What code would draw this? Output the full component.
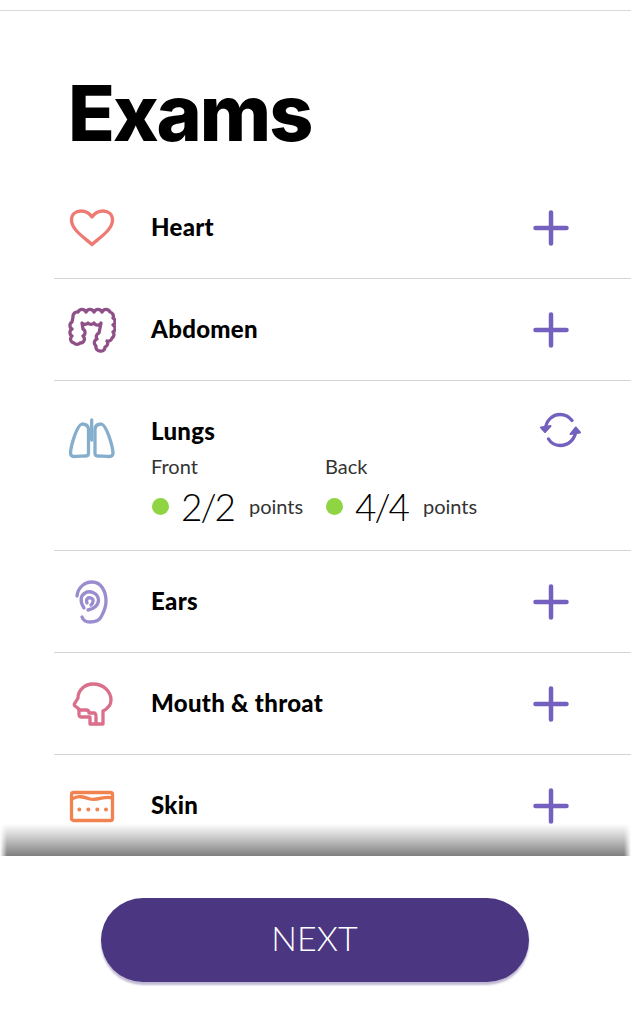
<div class="page">
  <div class="list-area">
    <h1>Exams</h1>
    <ul>
      <li class="row">
        <svg class="icon" viewBox="0 0 48 48" style="color:#ee7a73"><path d="M24 40.500C17 34 3.500 26 3.500 16C3.500 10 8 7 13 7C18 7 22 10 24 13C26 10 30 7 35 7C40 7 44.500 10 44.500 16C44.500 26 31 34 24 40.500Z"/></svg>
        <span class="name">Heart</span>
        <svg class="plus" viewBox="0 0 40 40"><path d="M20 4.500V35.500M4.500 20H35.500"/></svg>
      </li>
      <li class="row">
        <svg class="icon" viewBox="0 0 48 48" style="color:#8f4f88"><path d="M5 11a4.400 4.400 0 0 1 5-5a4.400 4.400 0 0 1 8 0a4.400 4.400 0 0 1 8 0a4.400 4.400 0 0 1 8 0a4.400 4.400 0 0 1 8 0a4.400 4.400 0 0 1 3 6a4 4 0 0 1 0 7a4 4 0 0 1 0 7a4 4 0 0 1-1 6a4 4 0 0 1-5 3a4 4 0 0 1-2 6a4 4 0 0 1-5 4a4 4 0 0 1-4-5a4 4 0 0 1 1-7a4 4 0 0 1 2-6l2-10a4 4 0 0 1-7 0a4 4 0 0 1-6 0a4 4 0 0 1-6 0l1 6a4 4 0 0 1 0 7a4 4 0 0 1-3 7a4 4 0 0 1-6 0a4 4 0 0 1-2-7a4 4 0 0 1 0-7a4 4 0 0 1 0-7Z"/></svg>
        <span class="name">Abdomen</span>
        <svg class="plus" viewBox="0 0 40 40"><path d="M20 4.500V35.500M4.500 20H35.500"/></svg>
      </li>
      <li class="row open">
        <svg class="icon" viewBox="0 0 48 48" style="color:#85aecd">
          <path d="M20.500 14C20 10 17 9 14 9C9 10 3 30 2.500 38C2.500 41 4 41.500 6 41.500C10 41.500 15 41 18 41C20 41 20.500 40 20.500 38Z"/>
          <path d="M27 14C27.400 10 30.400 9 33.400 9C38.400 10 44.400 30 45 38C45 41 43.400 41.500 41.400 41.500C37.400 41.500 32.400 41 29.400 41C27.400 41 27 40 27 38Z"/>
          <path d="M23.700 5V25"/>
        </svg>
        <div class="detail">
          <span class="name">Lungs</span>
          <div class="stats">
            <div class="stat">
              <div class="side">Front</div>
              <div class="score"><i class="dot"></i><b>2/2</b><span>points</span></div>
            </div>
            <div class="stat">
              <div class="side">Back</div>
              <div class="score"><i class="dot"></i><b>4/4</b><span>points</span></div>
            </div>
          </div>
        </div>
        <svg class="redo" viewBox="0 0 44 44">
          <path d="M7.500 21C8 12 15 6.500 22 6.500C27 6.500 31 8.500 34 12.500"/>
          <path d="M10.500 31C13 35 17 37.500 22 37.500C31 37.500 37 31 37.700 23"/>
          <path class="head" d="M7 24L3 19.500L12.500 18Z"/>
          <path class="head" d="M37.700 19.500L32.500 26L42 24.500Z"/>
        </svg>
      </li>
      <li class="row">
        <svg class="icon" viewBox="0 0 48 48" style="color:#9b8ccf">
          <path d="M9 18C10 9 17 4 24 4C33 4 38 13 38 23C38 31 35 35 33 39C31 43 27 44 22 44C18 44 15 42 14 39"/>
          <path d="M16 30C12 24 12 18 17 15C22 12 30 15 30.500 22C30.500 27 26 31 20 32"/>
          <path d="M19 25C17.500 21 20 19 23 20C26 21 25.500 25 23 27"/>
        </svg>
        <span class="name">Ears</span>
        <svg class="plus" viewBox="0 0 40 40"><path d="M20 4.500V35.500M4.500 20H35.500"/></svg>
      </li>
      <li class="row">
        <svg class="icon" viewBox="0 0 48 48" style="color:#da6f8b">
          <path d="M25 4C36 4 43 12 43 20C43 26 39 29 35 31V44H22V37H13C11.500 37 11 36 11 34V29L7 26C6 25 6 24 7 23L10 18C10 10 17 4 25 4Z"/>
          <path d="M11 30H18C20 30 21 31 21 33H26C28 33 28 35 28 37V44"/>
        </svg>
        <span class="name">Mouth &amp; throat</span>
        <svg class="plus" viewBox="0 0 40 40"><path d="M20 4.500V35.500M4.500 20H35.500"/></svg>
      </li>
      <li class="row">
        <svg class="icon" viewBox="0 0 48 48" style="color:#f0834f">
          <rect x="3.500" y="10.500" width="41" height="28" rx="2"/>
          <path d="M4 17C10 13 16 15 22 17C30 19 38 13 44 16"/>
          <path class="dots" d="M11.300 27.500h.01M20.300 27.500h.01M29.300 27.500h.01M38 27.500h.01"/>
        </svg>
        <span class="name">Skin</span>
        <svg class="plus" viewBox="0 0 40 40"><path d="M20 4.500V35.500M4.500 20H35.500"/></svg>
      </li>
    </ul>
  </div>
  <footer>
    <div class="shade"></div>
    <button type="button">NEXT</button>
  </footer>
</div>

<style>
  :global(body) { margin: 0; background: #fff; }
  .page {
    height: 1024px;
    display: flex;
    flex-direction: column;
    font-family: Lato, "Open Sans", sans-serif;
    color: #000;
    background: #fff;
    overflow: hidden;
  }
  .list-area {
    flex: none;
    overflow: hidden;
    margin-top: 10px;
    border-top: 1px solid #d9d9d9;
    height: 845px;
  }
  h1 {
    margin: 0;
    padding: 57px 0 0 68px;
    height: 109px;
    font-family: Inter, Lato, sans-serif;
    font-size: 77px;
    line-height: 90px;
    font-weight: 800;
    letter-spacing: -2px;
  }
  ul { list-style: none; margin: 0 0 0 54px; padding: 0; }
  .row {
    height: 101px;
    border-bottom: 1px solid #d4d4d4;
    display: grid;
    grid-template-columns: 97px 1fr auto;
    align-items: center;
    padding-right: 60px;
  }
  .row.open {
    height: 135px;
    align-items: start;
    padding-right: 49px;
    padding-top: 34px;
  }
  .icon {
    width: 48px;
    height: 48px;
    margin-left: 14px;
    fill: none;
    stroke: currentColor;
    stroke-width: 3.300;
    stroke-linecap: round;
    stroke-linejoin: round;
  }
  .dots { stroke-width: 4; }
  .name {
    display: block;
    font-size: 24px;
    line-height: 30px;
    font-weight: 900;
    letter-spacing: 0.300px;
    margin-top: -2px;
  }
  .plus {
    width: 40px;
    height: 40px;
    fill: none;
    stroke: #7360bf;
    stroke-width: 4.500;
    stroke-linecap: round;
  }
  .redo {
    width: 44px;
    height: 44px;
    margin-top: -7px;
    fill: none;
    stroke: #7360bf;
    stroke-width: 3.300;
    stroke-linecap: round;
  }
  .redo .head { fill: #7360bf; stroke-linejoin: round; stroke-width: 2; }
  .detail { margin-top: 3px; }
  .stats { display: flex; margin-top: 5px; }
  .stat { width: 174px; }
  .side { font-size: 20px; line-height: 30px; font-weight: 400; color: #333; }
  .score { display: flex; align-items: center; height: 44px; margin-top: 3px; }
  .dot { width: 17px; height: 17px; margin-left: 1px; border-radius: 50%; background: #8ed443; flex: none; }
  .score b { font-weight: 300; font-size: 37px; margin-left: 12px; color: #000; letter-spacing: -2px; }
  .score span { font-size: 20px; font-weight: 400; margin-left: 15px; color: #333; }
  footer {
    position: relative;
    flex: 1;
    background: #fff;
    padding: 42px 2px 0 0;
    display: flex;
    justify-content: center;
    align-items: flex-start;
  }
  .shade {
    position: absolute;
    left: 0;
    right: 0;
    top: -32px;
    height: 32px;
    background: linear-gradient(to bottom, rgba(0,0,0,0), rgba(0,0,0,.22) 45%, rgba(0,0,0,.5));
    -webkit-mask-image: linear-gradient(to right, transparent, #000 7px, #000 calc(100% - 7px), transparent);
    mask-image: linear-gradient(to right, transparent, #000 7px, #000 calc(100% - 7px), transparent);
  }
  button {
    width: 428px;
    height: 84px;
    border: 0;
    border-radius: 42px;
    background: #4b3681;
    color: #fff;
    font-family: Lato, sans-serif;
    font-weight: 300;
    font-size: 34px;
    padding: 0 0 5px;
    box-shadow: 0 3px 2px rgba(75, 54, 129, .35);
  }
</style>
